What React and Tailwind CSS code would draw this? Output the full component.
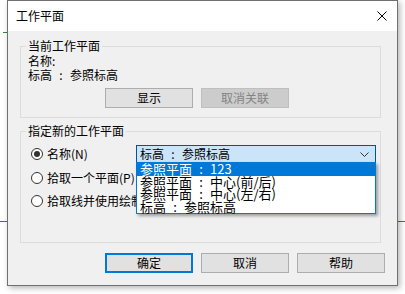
import React from "react";

const FONT = { fontFamily: '"Noto Sans CJK SC", "Noto Sans", sans-serif' };

function Radio({ checked }) {
  return (
    <span className="flex h-[12px] w-[12px] shrink-0 items-center justify-center rounded-full border border-[#333] bg-white">
      {checked && <span className="h-[6px] w-[6px] rounded-full bg-[#333]" />}
    </span>
  );
}

function Button({ children, disabled, primary }) {
  return (
    <button
      className={`flex h-[20px] w-[88px] items-center justify-center text-[12px] leading-none ${
        disabled
          ? "border border-[#bfbfbf] bg-[#cccccc] text-[#838383]"
          : primary
          ? "border-2 border-[#0078d7] bg-[#e1e1e1] text-black"
          : "border border-[#adadad] bg-[#e1e1e1] text-black"
      }`}
    >
      {children}
    </button>
  );
}

// "key : value" with the colon centred in a gap, as the Windows font draws it
function Pair({ k, v }) {
  return (
    <span className="whitespace-nowrap">
      {k}
      <span className="inline-block w-[18px] text-center">:</span>
      {v}
    </span>
  );
}

export default function App() {
  const items = [
    ["参照平面", "123"],
    ["参照平面", "中心(前/后)"],
    ["参照平面", "中心(左/右)"],
    ["标高", "参照标高"],
  ];

  return (
    <div className="relative h-[294px] w-[405px] overflow-hidden bg-white" style={FONT}>
      {/* background lines */}
      <div className="absolute left-[3px] top-[32px] h-px w-[5px] bg-[#2e8b2e]" />
      <div className="absolute left-0 top-[221px] h-px w-[8px] bg-[#2e8b2e]" />
      <div className="absolute right-0 top-[221px] h-px w-[8px] bg-[#2e8b2e]" />

      {/* Dialog */}
      <div className="absolute left-[7px] top-0 flex h-[286px] w-[391px] flex-col border border-[#707070] bg-[#f0f0f0] shadow-[2px_2px_6px_rgba(0,0,0,0.3)]">
        {/* Title bar */}
        <div className="flex h-[30px] shrink-0 items-center justify-between bg-white pl-[8px] pr-[10px]">
          <span className="text-[12px] leading-[14px] text-black">工作平面</span>
          <svg width="10" height="10" viewBox="0 0 10 10" className="mb-[1px]">
            <path d="M0.5 0.5 L9.5 9.5 M9.5 0.5 L0.5 9.5" stroke="#000" strokeWidth="1" fill="none" />
          </svg>
        </div>

        {/* Body */}
        <div className="flex flex-1 flex-col pl-[12px]">
          {/* Current work plane */}
          <fieldset className="mt-[7px] w-[361px] border border-[#dcdcdc] pb-[9px] pl-[7px] text-[12px] text-black">
            <legend className="ml-[-2px] px-[2px] leading-[16px]">当前工作平面</legend>
            <div className="leading-[14px]">名称:</div>
            <div className="leading-[14px]">
              <Pair k="标高" v="参照标高" />
            </div>
            <div className="ml-[77px] mt-[6px] flex gap-[8px]">
              <Button>显示</Button>
              <Button disabled>取消关联</Button>
            </div>
          </fieldset>

          {/* Specify new work plane */}
          <fieldset className="mt-[5px] w-[361px] border border-[#dcdcdc] pb-[31px] pl-[10px] text-[12px] text-black">
            <legend className="ml-[-5px] px-[2px] leading-[16px]">指定新的工作平面</legend>

            <div className="mt-[5px] flex h-[20px] items-center">
              <Radio checked />
              <span className="ml-[4px] w-[89px] leading-[14px]">名称(N)</span>
              <div className="relative">
                <div className="flex h-[18px] w-[240px] items-center justify-between border border-[#005499] bg-[#cce4f7] pl-[3px] pr-[6px]">
                  <span className="leading-[14px]">
                    <Pair k="标高" v="参照标高" />
                  </span>
                  <svg width="9" height="5" viewBox="0 0 9 5">
                    <path d="M0.5 0.5 L4.5 4.5 L8.5 0.5" stroke="#333" strokeWidth="1" fill="none" />
                  </svg>
                </div>
                {/* open list */}
                <div className="absolute left-0 top-[17px] z-10 w-[240px] border border-[#0078d7] bg-white shadow-[2px_2px_3px_rgba(0,0,0,0.35)]">
                  {items.map(([k, v], i) => (
                    <div
                      key={k + v}
                      className={`h-[12.5px] whitespace-nowrap pl-[3px] text-[13px] leading-[12.5px] ${
                        i === 0 ? "bg-[#0078d7] text-white" : "text-black"
                      }`}
                    >
                      <Pair k={k} v={v} />
                    </div>
                  ))}
                </div>
              </div>
            </div>

            <div className="mt-[4px] flex h-[20px] items-center">
              <Radio />
              <span className="ml-[4px] whitespace-nowrap leading-[14px]">拾取一个平面(P)</span>
            </div>

            <div className="mt-[3px] flex h-[20px] items-center">
              <Radio />
              <span className="ml-[4px] whitespace-nowrap leading-[14px]">拾取线并使用绘制该线的工作平面(L)</span>
            </div>
          </fieldset>

          {/* Footer buttons */}
          <div className="ml-[85px] mt-[10px] flex gap-[8px]">
            <Button primary>确定</Button>
            <Button>取消</Button>
            <Button>帮助</Button>
          </div>
        </div>
      </div>
    </div>
  );
}
